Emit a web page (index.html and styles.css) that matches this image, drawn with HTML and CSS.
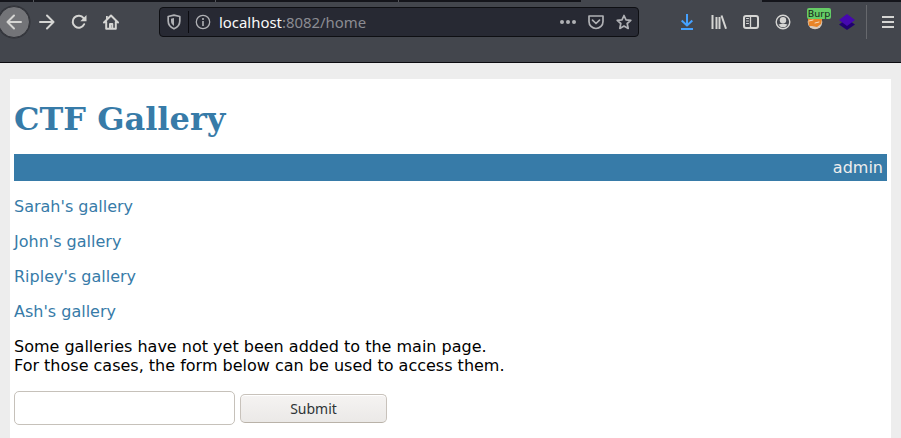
FILE: index.html
```html
<!DOCTYPE html>
<html lang="en">
<head>
<meta charset="utf-8">
<title>CTF Gallery</title>
<link rel="stylesheet" href="styles.css">
</head>
<body>
<header class="browser">
  <div class="tabs"><i class="t1"></i><i class="t2"></i><i class="t3"></i><i class="t4"></i><i class="active"></i><i class="rest"></i></div>
  <nav class="toolbar">
    <span class="tool back"><svg viewBox="0 0 16 16"><path d="M15 8H1.5M8 1.5 1.5 8 8 14.5"/></svg></span>
    <span class="tool"><svg viewBox="0 0 16 16"><path d="M1 8h13.5M8 1.5 14.5 8 8 14.5"/></svg></span>
    <span class="tool"><svg viewBox="0 0 16 16"><path d="M13.2 10.2A6 6 0 1 1 12.6 4.2"/><path class="fill" d="M15.5 1v6.2H9.3z"/></svg></span>
    <span class="tool"><svg viewBox="0 0 16 16"><path d="M1 8.5 8 1.5l7 7M3.2 8v6.7h9.6V8M7 14.5V10h2.3v4.5"/><path class="fill" d="M3 2h1.8v3L3 6.5z"/></svg></span>
    <div class="urlbar">
      <span class="uicon"><svg viewBox="0 0 16 16"><path d="M8 1.2 13.8 2.5V7c0 4-2.3 6.3-5.8 7.8C4.5 13.3 2.2 11 2.2 7V2.5z"/><path class="fill" d="M8 4v8C5.8 10.5 5 9 5 7V4.700z"/></svg></span>
      <span class="divider"></span>
      <span class="uicon"><svg class="thin info" viewBox="0 0 16 16"><circle cx="8" cy="8" r="6.700"/><path d="M8 7v5M8 4v2" stroke-width="1.600"/></svg></span>
      <span class="url">localhost<span class="dim">:8082/home</span></span>
      <span class="page-actions">
        <svg viewBox="0 0 16 16"><g class="fill"><circle cx="2" cy="8" r="2"/><circle cx="8" cy="8" r="2"/><circle cx="14" cy="8" r="2"/></g></svg>
        <svg viewBox="0 0 16 16"><path d="M1 2h14v5.500a7 7 0 0 1-14 0zM4.500 6.200 8 9.500l3.500-3.300"/></svg>
        <svg viewBox="0 0 16 16"><path d="M8 1.500 10 5.800l4.800.5-3.600 3.200 1 4.900L8 12l-4.200 2.400 1-4.900L1.200 6.300 6 5.800z"/></svg>
      </span>
    </div>
    <div class="extras">
      <span class="tool"><svg class="download" viewBox="0 0 16 16"><path d="M8 0v11M2.700 6.500 8 11.500l5.300-5M2 15h12"/></svg></span>
      <span class="tool"><svg class="library" viewBox="0 0 16 16"><path d="M1.500 1v14M5.500 3v12M8.500 3v12M10.500 1.500l4.500 13.200"/></svg></span>
      <span class="tool"><svg viewBox="0 0 16 16"><rect x="1" y="2" width="14" height="12" rx="2"/><path d="M7.500 2v12" stroke-width="1.300"/><path d="M3.500 4.500h2M3.500 7h2M3.500 9.500h2" stroke-width="1"/></svg></span>
      <span class="tool"><svg class="thin" viewBox="0 0 16 16"><circle cx="8" cy="8" r="6.800"/><g class="fill"><circle cx="8" cy="6.200" r="3.200"/><path d="M3.500 10.500Q8 9 12.500 10.500 11 13.300 8 13.300T3.500 10.500"/></g></svg></span>
      <span class="tool proxy"><svg viewBox="0 0 16 16"><circle cx="8" cy="8" r="7.300" fill="#d8cbbd" stroke="none"/><path d="M1 5h14l-1 5-4 3-5-1-3 0z" fill="#e98427" stroke="none"/><path d="M2 7l4-1M8 9l4-1" stroke="#f5dcc0" stroke-width="1"/></svg><b class="badge">Burp</b></span>
      <span class="tool"><svg viewBox="0 0 16 16"><path d="M0 10.500 8 5l8 5.500L8 16z" fill="#200070" stroke="none"/><path d="M0 6 8 0l8 6-8 6z" fill="#4608b0" stroke="none"/></svg></span>
      <span class="separator"></span>
      <span class="tool menu"><svg viewBox="0 0 16 16"><path d="M2 3h12M2 8h12M2 13h12"/></svg></span>
    </div>
  </nav>
</header>
<main class="page">
  <h1>CTF Gallery</h1>
  <div class="userbar">admin</div>
  <p><a>Sarah's gallery</a></p>
  <p><a>John's gallery</a></p>
  <p><a>Ripley's gallery</a></p>
  <p><a>Ash's gallery</a></p>
  <p>Some galleries have not yet been added to the main page.<br>For those cases, the form below can be used to access them.</p>
  <form class="access"><input type="text" class="field" aria-label="Gallery"><button type="button" class="submit">Submit</button></form>
</main>
</body>
</html>
```
FILE: styles.css
```css
* { box-sizing: border-box; }
html { height: 100%; overflow: hidden; }
body { margin: 0; height: 438px; overflow: hidden; background: #ededed; font: 16px/19px "DejaVu Sans", sans-serif; color: #000; }
.browser { height: 63px; background: #43464d; border-bottom: 1px solid #0b0b10; }
.tabs { display: flex; height: 2px; }
.tabs i { background: #14151b; border-right: 1px solid #55575c; }
.t1 { width: 34px; }
.t2 { width: 182px; }
.t3 { width: 183px; }
.tabs .t4 { width: 182px; border: 0; }
.tabs .active { width: 181px; background: #43464d; border: 0; }
.tabs .rest { flex: 1; border: 0; }
.toolbar { display: flex; align-items: center; height: 40px; }
svg { display: block; width: 16px; height: 16px; overflow: visible; fill: none; stroke: #d5d5d3; stroke-width: 2; stroke-linejoin: round; stroke-linecap: round; }
.fill { fill: #d5d5d3; stroke: none; }
.thin { stroke-width: 1.4; }
.tool { display: flex; align-items: center; justify-content: center; flex: none; width: 32px; height: 32px; position: relative; }
.back { margin-left: -2px; margin-right: 1px; border: 1px solid #303238; border-radius: 50%; background: #737478; box-shadow: 0 0 0 .5px #303238; }
.urlbar { display: flex; align-items: center; flex: none; width: 480px; height: 30px; margin-left: 32px; padding-left: 6px; padding-right: 6px; background: #272933; border: 1px solid #0e0f13; border-radius: 4px; }
.urlbar svg { stroke: #b0b1b5; stroke-width: 1.7; }
.urlbar .thin { stroke-width: 1.3; }
.urlbar .info { stroke-linecap: butt; }
.urlbar .fill { fill: #b0b1b5; }
.divider { width: 1px; height: 22px; margin: 0 6px; background: #0b0b10; }
.url { margin-left: 8px; font: 14.9px/20px "Noto Sans", sans-serif; color: #f9f9fa; }
.dim { color: #8b8c92; }
.page-actions { display: flex; gap: 12px; margin-left: auto; }
.extras { display: flex; align-items: center; margin-left: auto; }
.extras .download { stroke: #45a1ff; }
.extras .download path, .library { stroke-linecap: butt; }
.badge { position: absolute; top: 2px; left: 8px; width: 24px; height: 11px; border-radius: 2px; background: #66cc66; color: #14251b; font: 9.5px/11px "DejaVu Sans", sans-serif; text-align: center; }
.separator { width: 1px; height: 34px; margin-left: 3px; background: #66686d; }
.menu { margin-left: 5px; margin-right: -3px; }
.menu svg { stroke-linecap: butt; }
.page { display: flow-root; height: 359px; margin: 16px 10px 0; padding: 0 4px; background: #fff; }
h1 { margin: 22px 0 16px; font: bold 32px/37px "DejaVu Serif", serif; color: #377ba8; }
.userbar { padding: 4px; text-align: right; background: #377ba8; color: #eee; }
p { margin: 16px 0; }
a { color: #377ba8; }
.access { display: flex; align-items: center; gap: 5px; }
.field { width: 221px; height: 34px; border: 1px solid #c6c1ba; border-radius: 5px; background: #fff; }
.submit { width: 147px; height: 29px; margin-top: 1px; padding: 0; border: 1px solid #c8c2bb; border-bottom-color: #b9b2a8; border-radius: 5px; background: linear-gradient(#f5f3f2, #ebe9e7); box-shadow: inset 0 1px #fff; font: 14px/20px "Noto Sans", sans-serif; color: #2e3436; }
```
